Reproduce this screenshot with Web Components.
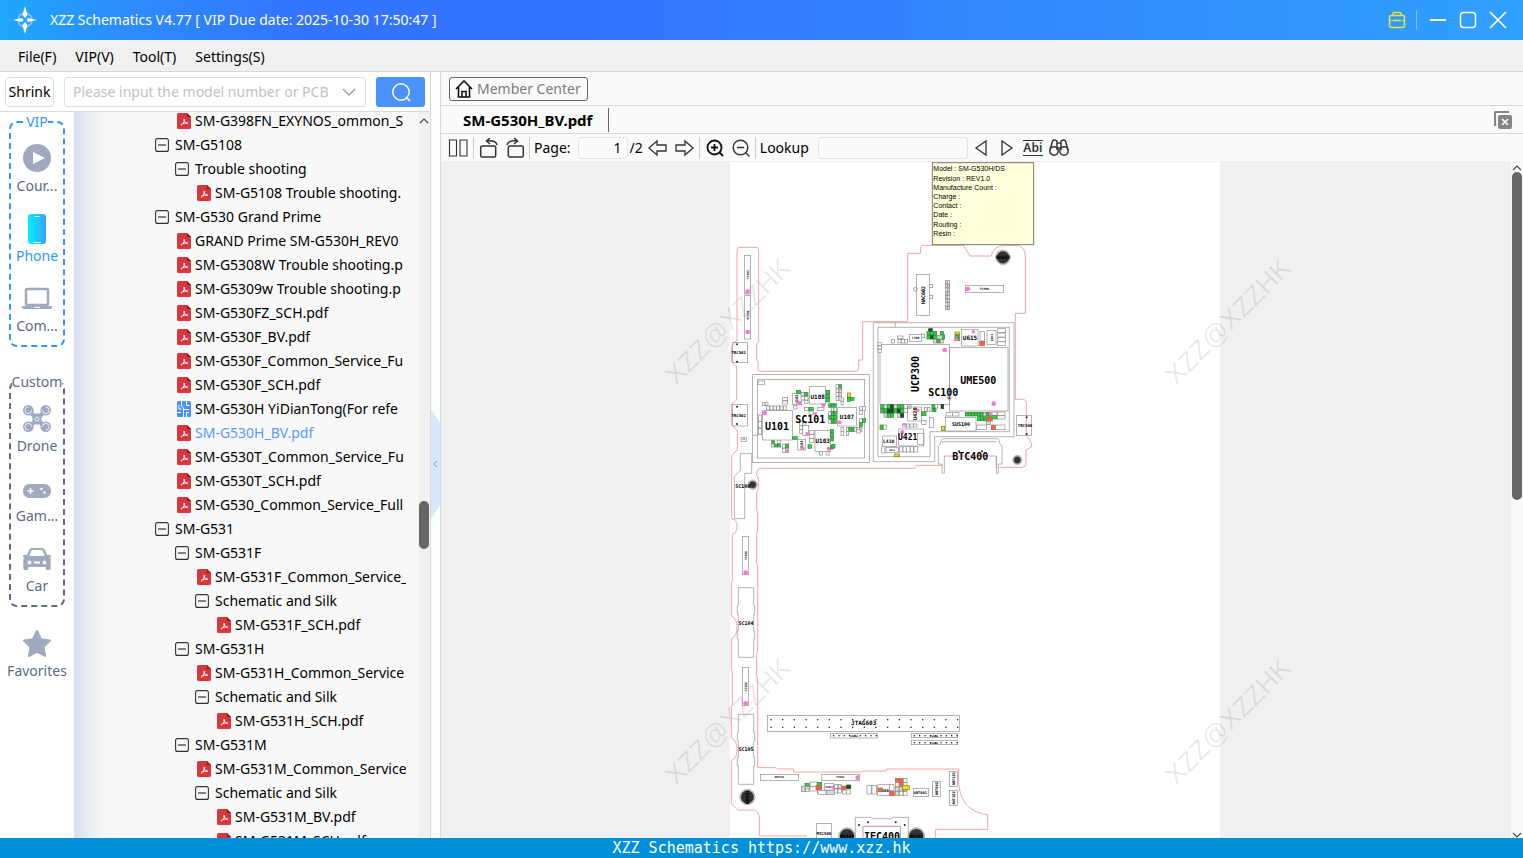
<!DOCTYPE html>
<html lang="en">
<head>
<meta charset="utf-8">
<title>XZZ Schematics</title>
<style>
  html, body {
    margin: 0;
    height: 100%;
    overflow: hidden;
    font-family: "Noto Sans", "Open Sans", sans-serif;
    font-size: 14px;
    line-height: 20px;
    color: #000;
  }
</style>
</head>
<body>
<xzz-app></xzz-app>

<script>
const BASE = `
  * { box-sizing: border-box; }
  button, a, input, fieldset, legend { font: inherit; color: inherit; margin: 0; padding: 0; border: 0; background: none; }
  button { cursor: pointer; }
  a { text-decoration: none; }
  svg { display: block; }
`;

const ICONS = {
  logo: [28, 28, `<circle cx="14" cy="14" r="7" fill="none" stroke="#8fc4ff" stroke-width="1.5"/>
    <path d="M14 0l2.6 9-2.6 3-2.6-3zM14 28l2.6-9-2.6-3-2.6 3zM2 14l9-2 1.500 2-1.500 2zM26 14l-9-2-1.500 2 1.500 2z" fill="#fff"/>`],
  bag: [18, 18, `<g fill="none" stroke="#e6e23c" stroke-width="1.500"><rect x="1.500" y="4.500" width="15" height="12" rx="2"/><path d="M5 4.500v-2q0-1 1-1h6q1 0 1 1v2M1.500 9.500h2M14.500 9.500h2M4.500 9.500h9"/></g>`],
  min: [18, 18, `<path d="M1 9h16" stroke="#fff" stroke-width="2"/>`],
  max: [18, 18, `<rect x="1.500" y="1.500" width="15" height="15" rx="3" fill="none" stroke="#fff" stroke-width="1.500"/>`],
  close: [18, 18, `<path d="M1 1l16 16M17 1L1 17" stroke="#fff" stroke-width="1.700"/>`],
  down: [14, 14, `<path d="M1 4l6 6 6-6" fill="none" stroke="#9a9ea6" stroke-width="1.500"/>`],
  search: [20, 20, `<circle cx="10" cy="10" r="8.200" fill="none" stroke="#fff" stroke-width="1.500"/><path d="M15 15l4 4" stroke="#fff" stroke-width="1.700"/>`],
  course: [28, 28, `<circle cx="14" cy="14" r="14" fill="#a0a9bf"/><path d="M10 8l12 6-12 6z" fill="#fff"/>`],
  phone: [28, 32, `<defs><linearGradient id="g"><stop stop-color="#00f0ff"/><stop offset="1" stop-color="#3aa2ff"/></linearGradient></defs>
    <rect x="5" y="0" width="18" height="30" rx="3" fill="url(#g)"/><path d="M11.500 2.500h5M10 28.500h8" stroke="#d6f6ff" stroke-width="1.200"/>`],
  computer: [30, 28, `<rect x="4" y="5" width="22" height="16" rx="1" fill="none" stroke="#a0a9bf" stroke-width="2.500"/><path d="M0 22h30v2q-1 1-2 1H2q-1 0-2-1z" fill="#a0a9bf"/><path d="M12 23.300h6" stroke="#fff"/>`],
  drone: [28, 28, `<g transform="translate(0 1)"><path d="M6 6l16 16M22 6L6 22" stroke="#a0a9bf" stroke-width="4"/><rect x="9.500" y="8.500" width="9" height="11" rx="3" fill="#a0a9bf"/>
    <g fill="#a0a9bf"><circle cx="5.300" cy="5.300" r="5.300"/><circle cx="22.700" cy="5.300" r="5.300"/><circle cx="5.300" cy="21.700" r="5.300"/><circle cx="22.700" cy="21.700" r="5.300"/></g>
    <g fill="none" stroke="#fff" stroke-width=".8"><path d="M5.300 2a3.300 3.300 0 1 0 3.300 3.300M22.700 2a3.300 3.300 0 1 1-3.300 3.300M5.300 25a3.300 3.300 0 1 1 3.300-3.300M22.700 25a3.300 3.300 0 1 0-3.300-3.300"/><circle cx="14" cy="14" r="2"/></g></g>`],
  game: [28, 28, `<rect y="10" width="28" height="14" rx="6.500" fill="#a0a9bf"/><path d="M4.500 17h6M7.500 14v6" stroke="#fff" stroke-width="1.500"/><circle cx="18.500" cy="15" r="1.200" fill="#fff"/><circle cx="21.500" cy="18.500" r="1.200" fill="#fff"/>`],
  car: [28, 28, `<g transform="translate(0 2)"><path d="M0 10q0-1 1.500-1H4l2-5q1-2 3-2h10q2 0 3 2l2 5h2.500Q28 9 28 10v1h-1.500l1.200 2V22q0 2-1.500 2h-2q-1.500 0-1.500-2v-1H5.300v1q0 2-1.500 2h-2Q.3 24 .3 22V13l1.200-2H0z" fill="#a0a9bf"/>
    <path d="M6.500 9l1.700-4q.3-1 1.300-1h9q1 0 1.300 1l1.700 4q.2 1-.6 1H7.100q-.8 0-.6-1z" fill="#fff"/><circle cx="6.500" cy="16.500" r="1.900" fill="#fff"/><circle cx="21.500" cy="16.500" r="1.900" fill="#fff"/><rect x="11" y="15.500" width="6" height="2" fill="#fff"/></g>`],
  star: [28, 28, `<path d="M14 2l4 8.300 9 1.300-6.500 6.300 1.500 9L14 22.600 6 27l1.500-9L1 11.600l9-1.300z" fill="#a0a9bf" stroke="#a0a9bf" stroke-width="2" stroke-linejoin="round"/>`],
  minus: [14, 14, `<rect x=".6" y=".6" width="12.800" height="12.800" rx="2" fill="none" stroke="#333" stroke-width="1.100"/><path d="M3 7h8" stroke="#333" stroke-width="1.200"/>`],
  pdf: [14, 16, `<path d="M1.500 0H10l4 4v10.500q0 1.500-1.500 1.500h-11Q0 16 0 14.500v-13Q0 0 1.500 0z" fill="#d6383f"/><path d="M10 0l4 4h-4z" fill="#8c1a20"/><path d="M7.300 6c-.8 2.500 2 4.500 3.700 4.300M7.300 6c.6 2.500-1.800 5.500-3.300 6.300M4.500 11.500c1.500-1.500 4-1.800 6.500-1.200" fill="none" stroke="#fff"/>`],
  board: [14, 16, `<rect width="14" height="16" rx="1.500" fill="#4a90f5"/><path d="M4.500 0v5l2 2v9M9.500 0v4.500h3M2 4v4h2.500M0 11.500h4M9.500 16v-4.500H12M7 8.500h5" fill="none" stroke="#fff" stroke-width="1"/>`],
  home: [18, 18, `<path d="M1 9L9 1l8 8M3.500 7v10h11V7M7 17v-5.500h4V17" fill="none" stroke="#111" stroke-width="1.600"/>`],
  closeall: [18, 18, `<path d="M1 15V2q0-1 1-1h13" fill="none" stroke="#858585" stroke-width="2.200"/><rect x="4" y="4" width="14" height="14" rx="2" fill="#858585"/><path d="M8 8l6 6M14 8l-6 6" stroke="#fff" stroke-width="1.600"/>`],
  pages: [20, 20, `<path d="M1.500 2h7v16h-7zM12 2h7v16h-7z" fill="none" stroke="#333" stroke-width="1.100"/>`],
  rotl: [20, 20, `<g fill="none" stroke="#333" stroke-width="1.500"><rect x="1.700" y="8" width="15" height="11" rx="1.500"/><path d="M18 7q-1-5-10-4M11 0L7.500 3 11 6"/></g>`],
  rotr: [20, 20, `<g fill="none" stroke="#333" stroke-width="1.500"><rect x="3.300" y="8" width="15" height="11" rx="1.500"/><path d="M2 7q1-5 10-4M9 0l3.500 3L9 6"/></g>`],
  prev: [20, 20, `<path d="M1 10l8-7v4h9v6H9v4z" fill="none" stroke="#333" stroke-width="1.300"/>`],
  next: [20, 20, `<path d="M19 10l-8-7v4H2v6h9v4z" fill="none" stroke="#333" stroke-width="1.300"/>`],
  zin: [20, 20, `<g fill="none" stroke="#111" stroke-width="1.800"><circle cx="9.500" cy="9.500" r="7"/><path d="M14 14l4 4M6 9.500h7M9.500 6v7"/></g>`],
  zout: [20, 20, `<g fill="none" stroke="#333" stroke-width="1.400"><circle cx="9.500" cy="9.500" r="7.300"/><path d="M14.500 14.500l4 4M6 9.500h7"/></g>`],
  tril: [20, 20, `<path d="M15 3v14L5 10z" fill="none" stroke="#333" stroke-width="1.300"/>`],
  trir: [20, 20, `<path d="M5 3v14l10-7z" fill="none" stroke="#333" stroke-width="1.300"/>`],
  binoc: [20, 20, `<g fill="none" stroke="#333" stroke-width="1.500"><circle cx="5" cy="13" r="4.200"/><circle cx="15" cy="13" r="4.200"/><path d="M1 12L3.500 3Q5 1 8 3v9M19 12l-2.500-9Q15 1 12 3v9M8 5h4M8 10h4"/></g>`],
  up: [10, 6, `<path d="M1 5l4-4 4 4" fill="none" stroke="#444" stroke-width="1.100"/>`],
  dn: [10, 6, `<path d="M1 1l4 4 4-4" fill="none" stroke="#444" stroke-width="1.100"/>`],
  left: [5, 8, `<path d="M4 1L1 4l3 3" fill="none" stroke="#3fa0f0"/>`],
};

class AppIcon extends HTMLElement {
  constructor() {
    super();
    this.attachShadow({ mode: 'open' });
  }

  connectedCallback() {
    const [w, h, body] = ICONS[this.getAttribute('name')];
    this.shadowRoot.innerHTML = `
      <style>:host { display: block; flex: none; } svg { display: block; }</style>
      <svg width="${w}" height="${h}" viewBox="0 0 ${w} ${h}" aria-hidden="true">${body}</svg>`;
  }
}
customElements.define('app-icon', AppIcon);

class TitleBar extends HTMLElement {
  constructor() {
    super();
    this.attachShadow({ mode: 'open' }).innerHTML = `
      <style>${BASE}
        :host {
          display: flex;
          align-items: center;
          height: 40px;
          padding: 0 16px 0 11px;
          color: #fff;
          background: linear-gradient(90deg, #1fa8fc 0, #2c8dfd 120px, #3374ff 300px, #3374ff 600px, #3199ff 90%, #2fa0ff);
        }
        .title { flex: 1; margin-left: 11px; }
        .tools { display: flex; align-items: center; gap: 12px; }
        .tools i { width: 1px; height: 20px; margin-left: -2px; background: #7fc0ff; }
      </style>
      <app-icon name="logo"></app-icon>
      <span class="title"><slot></slot></span>
      <div class="tools">
        <button aria-label="Membership"><app-icon name="bag"></app-icon></button><i></i>
        <button aria-label="Minimize"><app-icon name="min"></app-icon></button>
        <button aria-label="Maximize"><app-icon name="max"></app-icon></button>
        <button aria-label="Close"><app-icon name="close"></app-icon></button>
      </div>`;
  }
}
customElements.define('title-bar', TitleBar);

class MenuBar extends HTMLElement {
  constructor() {
    super();
    this.attachShadow({ mode: 'open' }).innerHTML = `
      <style>${BASE}
        :host {
          display: flex;
          align-items: center;
          gap: 19px;
          height: 32px;
          padding: 2px 18px 0;
          background: #f0f0f0;
          border-bottom: 1px solid #d9d9d9;
          box-sizing: border-box;
        }
      </style>
      <button>File(F)</button><button>VIP(V)</button><button>Tool(T)</button><button>Settings(S)</button>`;
  }
}
customElements.define('menu-bar', MenuBar);

class SearchRow extends HTMLElement {
  constructor() {
    super();
    this.attachShadow({ mode: 'open' }).innerHTML = `
      <style>${BASE}
        :host {
          display: flex;
          gap: 10px;
          height: 40px;
          padding: 5px 5px 4px;
          background: #fff;
          border-bottom: 1px solid #d9d9d9;
          box-sizing: border-box;
        }
        .shrink { width: 49px; border: 1px solid #dcdfe6; border-radius: 4px; }
        .combo {
          flex: 1;
          display: flex;
          align-items: center;
          min-width: 0;
          padding: 0 9px 0 8px;
          border: 1px solid #dcdfe6;
          border-radius: 3px;
        }
        .combo input { flex: 1; min-width: 0; outline: 0; }
        .combo input::placeholder { color: #bfc2c8; opacity: 1; }
        .go { display: grid; place-items: center; width: 49px; background: #4a93ff; border-radius: 3px; }
      </style>
      <button class="shrink">Shrink</button>
      <div class="combo">
        <input aria-label="Model number" placeholder="Please input the model number or PCB">
        <button aria-label="History"><app-icon name="down"></app-icon></button>
      </div>
      <button class="go" aria-label="Search"><app-icon name="search"></app-icon></button>`;
  }
}
customElements.define('search-row', SearchRow);

class RailItem extends HTMLElement {
  constructor() {
    super();
    this.attachShadow({ mode: 'open' });
  }

  connectedCallback() {
    this.shadowRoot.innerHTML = `
      <style>${BASE}
        :host { display: block; color: #606a80; }
        :host([active]) { color: #3296fa; }
        button { display: flex; flex-direction: column; align-items: center; width: 100%; height: 70px; padding-top: 12px; gap: 4px; }
        span { display: grid; place-items: center; height: 28px; }
      </style>
      <button><span><app-icon name="${this.getAttribute('icon')}"></app-icon></span><slot></slot></button>`;
  }
}
customElements.define('rail-item', RailItem);

class CategoryRail extends HTMLElement {
  constructor() {
    super();
    this.attachShadow({ mode: 'open' }).innerHTML = `
      <style>${BASE}
        :host { display: block; width: 74px; background: #fff; flex: none; }
        fieldset {
          margin: 0 9px 25px;
          padding-bottom: 3px;
          min-width: 0;
          border: 2px dashed #3296fa;
          border-radius: 8px;
        }
        fieldset.custom { border-color: #606a80; margin-bottom: 10px; }
        legend { margin: 0 auto; color: #3296fa; }
        .custom legend { color: #606a80; }
      </style>
      <fieldset>
        <legend>VIP</legend>
        <rail-item icon="course">Cour...</rail-item>
        <rail-item icon="phone" active>Phone</rail-item>
        <rail-item icon="computer">Com...</rail-item>
      </fieldset>
      <fieldset class="custom">
        <legend>Custom</legend>
        <rail-item icon="drone">Drone</rail-item>
        <rail-item icon="game">Gam...</rail-item>
        <rail-item icon="car">Car</rail-item>
      </fieldset>
      <rail-item icon="star">Favorites</rail-item>`;
  }
}
customElements.define('category-rail', CategoryRail);

class ScrollTrack extends HTMLElement {
  constructor() {
    super();
    this.attachShadow({ mode: 'open' }).innerHTML = `
      <style>${BASE}
        :host { display: flex; flex-direction: column; align-items: center; flex: none; width: 12px; background: #f0f0f0; }
        app-icon { padding: var(--pad, 6px) 0 0; }
        .end { display: var(--end, block); }
        .before { flex: var(--before) 1 0; }
        .thumb { flex: var(--thumb) 1 0; width: 10px; border-radius: 5px; background: #666; }
        .after { flex: var(--after) 1 0; }
      </style>
      <app-icon name="up"></app-icon><div class="before"></div><div class="thumb"></div><div class="after"></div><app-icon class="end" name="dn"></app-icon>`;
  }
}
customElements.define('scroll-track', ScrollTrack);

// level, kind, label
const FILES = [
  [2, 'pdf', 'SM-G398FN_EXYNOS_ommon_S'],
  [1, 'minus', 'SM-G5108'],
  [2, 'minus', 'Trouble shooting'],
  [3, 'pdf', 'SM-G5108 Trouble shooting.'],
  [1, 'minus', 'SM-G530 Grand Prime'],
  [2, 'pdf', 'GRAND Prime SM-G530H_REV0'],
  [2, 'pdf', 'SM-G5308W Trouble shooting.p'],
  [2, 'pdf', 'SM-G5309w Trouble shooting.p'],
  [2, 'pdf', 'SM-G530FZ_SCH.pdf'],
  [2, 'pdf', 'SM-G530F_BV.pdf'],
  [2, 'pdf', 'SM-G530F_Common_Service_Fu'],
  [2, 'pdf', 'SM-G530F_SCH.pdf'],
  [2, 'board', 'SM-G530H YiDianTong(For refe'],
  [2, 'pdf', 'SM-G530H_BV.pdf', true],
  [2, 'pdf', 'SM-G530T_Common_Service_Fu'],
  [2, 'pdf', 'SM-G530T_SCH.pdf'],
  [2, 'pdf', 'SM-G530_Common_Service_Full'],
  [1, 'minus', 'SM-G531'],
  [2, 'minus', 'SM-G531F'],
  [3, 'pdf', 'SM-G531F_Common_Service_'],
  [3, 'minus', 'Schematic and Silk'],
  [4, 'pdf', 'SM-G531F_SCH.pdf'],
  [2, 'minus', 'SM-G531H'],
  [3, 'pdf', 'SM-G531H_Common_Service'],
  [3, 'minus', 'Schematic and Silk'],
  [4, 'pdf', 'SM-G531H_SCH.pdf'],
  [2, 'minus', 'SM-G531M'],
  [3, 'pdf', 'SM-G531M_Common_Service'],
  [3, 'minus', 'Schematic and Silk'],
  [4, 'pdf', 'SM-G531M_BV.pdf'],
  [4, 'pdf', 'SM-G531M_SCH.pdf'],
];

class FileTree extends HTMLElement {
  constructor() {
    super();
    this.attachShadow({ mode: 'open' }).innerHTML = `
      <style>${BASE}
        :host {
          display: flex;
          flex: 1;
          min-width: 0;
          background: linear-gradient(90deg, #d5e0f2 0, #e6eaf2 12px, #f8f8f8 32px);
        }
        .list { flex: 1; min-width: 0; overflow: hidden; margin-right: 12px; }
        ul { list-style: none; margin: -3px 0 0; padding: 0; }
        li {
          display: flex;
          align-items: center;
          height: 24px;
          padding-left: calc(61px + 20px * var(--level));
          white-space: nowrap;
        }
        li app-icon { margin-right: 6px; }
        li app-icon:not([name="minus"]) { margin: 0 4px 0 2px; }
        .on { color: #5a9bff; }
        scroll-track { --before: 377; --thumb: 48; --after: 289; --end: none; }
      </style>
      <div class="list"><ul>${FILES.map(([level, kind, label, on]) => `
        <li style="--level:${level}"><app-icon name="${kind}"></app-icon><span class="${on ? 'on' : ''}">${label}</span></li>`).join('')}
      </ul></div>
      <scroll-track></scroll-track>`;
  }
}
customElements.define('file-tree', FileTree);

class PanelHandle extends HTMLElement {
  constructor() {
    super();
    this.attachShadow({ mode: 'open' }).innerHTML = `
      <style>${BASE}
        :host {
          display: flex;
          align-items: center;
          width: 11px;
          flex: none;
          padding-top: 18px;
          background: #fafffa;
          border: 1px solid #d9d9d9;
          border-width: 0 1px;
          box-sizing: border-box;
        }
        button {
          display: grid;
          place-items: center;
          width: 9px;
          height: 110px;
          background: #d3e8ff;
          clip-path: polygon(0 0, 100% 14px, 100% 96px, 0 100%);
        }
      </style>
      <button aria-label="Collapse panel"><app-icon name="left"></app-icon></button>`;
  }
}
customElements.define('panel-handle', PanelHandle);

class DocTabs extends HTMLElement {
  constructor() {
    super();
    this.attachShadow({ mode: 'open' }).innerHTML = `
      <style>${BASE}
        :host { display: block; background: #fafafa; }
        .row { display: flex; align-items: center; border-bottom: 1px solid #d9d9d9; }
        .top { height: 34px; padding-left: 8px; }
        .tabs { height: 28px; padding: 0 11px 0 8px; justify-content: space-between; }
        .home {
          display: flex;
          align-items: center;
          gap: 4px;
          height: 24px;
          padding: 0 6px 0 5px;
          border: 1px solid #666;
          border-radius: 3px;
          color: #7c7c7c;
        }
        .tab { height: 24px; padding: 0 16px 0 14px; border-right: 1px solid #666; font-size: 15px; font-weight: 700; }
      </style>
      <div class="row top"><button class="home"><app-icon name="home"></app-icon>Member Center</button></div>
      <div class="row tabs">
        <button class="tab">SM-G530H_BV.pdf</button>
        <button aria-label="Close all"><app-icon name="closeall"></app-icon></button>
      </div>`;
  }
}
customElements.define('doc-tabs', DocTabs);

class DocToolbar extends HTMLElement {
  constructor() {
    super();
    this.attachShadow({ mode: 'open' }).innerHTML = `
      <style>${BASE}
        :host { display: flex; align-items: center; height: 27px; padding-left: 7px; background: #fafafa; box-sizing: border-box; }
        button { flex: none; }
        button + button { margin-left: 6px; }
        span + button { margin-left: 5px; }
        i { width: 1px; height: 22px; margin: 0 4px; background: #ccc; }
        i.wide { margin: 0 5px; }
        input { height: 22px; border: 1px solid #e2e2e2; border-radius: 3px; background: #fafafa; }
        .num { width: 50px; margin: 0 2px 0 7px; padding-right: 5px; text-align: right; }
        .find { width: 150px; margin: 0 3px 0 9px; }
        .abi { width: 20px; font-size: 12px; line-height: 14px; font-weight: 600; color: #333; text-align: center; }
        .abi span { display: block; border: 1px solid #333; border-width: 1px 0; }
      </style>
      <button aria-label="Two pages"><app-icon name="pages"></app-icon></button><i class="wide"></i>
      <button aria-label="Rotate left"><app-icon name="rotl"></app-icon></button>
      <button aria-label="Rotate right"><app-icon name="rotr"></app-icon></button><i></i>
      <label for="page">Page:</label><input class="num" id="page" value="1"><span>/2</span>
      <button aria-label="Previous page"><app-icon name="prev"></app-icon></button>
      <button aria-label="Next page"><app-icon name="next"></app-icon></button><i class="wide"></i>
      <button aria-label="Zoom in"><app-icon name="zin"></app-icon></button>
      <button aria-label="Zoom out"><app-icon name="zout"></app-icon></button><i></i>
      <label for="find">Lookup</label><input class="find" id="find">
      <button aria-label="Find previous"><app-icon name="tril"></app-icon></button>
      <button aria-label="Find next"><app-icon name="trir"></app-icon></button>
      <button class="abi"><span>Abi</span></button>
      <button aria-label="Find"><app-icon name="binoc"></app-icon></button>`;
  }
}
customElements.define('doc-toolbar', DocToolbar);

// Board drawing. Three units are one pixel at 100%.
const FILL = { w: '#fff', g: '#22d832', d: '#0b5a14', r: '#ff5f3c', y: '#f0dc1e', x: '#dcdcdc' };
const EDGE = { w: '#888', g: '#3a7a40', d: '#243', r: '#b65', y: '#872', x: '#888' };

// grid of small parts; a space in a row leaves the place empty
function cells(x, y, w, h, ...rows) {
  return rows.map((row, r) => [...row].map((c, i) => c === ' ' ? '' :
    `<rect x="${x + i * w}" y="${y + r * h}" width="${w - 1}" height="${h - 1}" fill="${FILL[c]}" stroke="${EDGE[c]}"/>`).join('')).join('');
}

const box = (x, y, w, h) => `<rect x="${x}" y="${y}" width="${w}" height="${h}"/>`;
const pin = (x, y, r = 7) => `<circle cx="${x}" cy="${y}" r="${r}" fill="#ff73c8" stroke="none"/>`;
const dot = (x, y) => `<circle cx="${x}" cy="${y}" r="3" fill="#222" stroke="none"/>`;
const dots = (x, y, n, step) => Array.from({ length: n }, (_, i) => `<rect x="${x + i * step}" y="${y}" width="4" height="4" fill="#333" stroke="none"/>`).join('');
const hole = (x, y, r, name = '') => `<circle cx="${x}" cy="${y}" r="${r + 3}"/><circle cx="${x}" cy="${y}" r="${r}" fill="#333"/>${name && label(name, x, y, 14)}`;

function label(text, x, y, size, turn) {
  return `<text x="${x}" y="${y + Math.round(size * 0.36)}" font-size="${size}"${turn ? ` transform="rotate(-90 ${x} ${y})"` : ''}>${text}</text>`;
}

const NOTE = ['Model : SM-G530H/DS', 'Revision : REV1.0', 'Manufacture Count :', 'Charge :', 'Contact :', 'Date :', 'Routing :', 'Resin :'];

const OUTLINE = `
  M33 540 V270 q0 -8 9 -8 H90 q8 0 8 8 V545 l-6 6 V600 l4 6 v22 q0 6 8 6 H390 q8 0 8 -10 V600 h12 V485 H545 V280 H584 V262 q0 -6 8 -6 H712 L732 288 H795 Q802 256 840 256 H866 Q898 256 898 288 V460 H868 V718 H893 q8 2 8 12 V830 q16 10 16 30 l-17 10 V910 q0 12 -12 12 H820
  M650 916 H572 L565 925 H104 Q92 926 92 945 L98 960 V985 L92 995 V1050 L95 1055 V1115 L92 1120 V1210 L95 1215 V1475 L92 1480 V1550 L95 1560 V1823 H150 L155 1827 H203 V1836 H410 L415 1833 H482 V1827 H698 V1870 Q705 1955 785 1964 V2008 H628 V2040
  M33 540 L16 560 V605 l16 15 V720 l-16 14 V795 l18 15 V870 L17 885 V1072 L18 1077 Q33 1080 33 1098 Q33 1120 19 1122 V1265 L16 1270 V1367 Q33 1375 33 1402 Q33 1430 16 1436 V1530 L19 1535 V1635 L16 1640 V1735 Q33 1740 33 1770 Q33 1795 16 1802 V1930 L35 1950 H85 Q100 1955 100 1975 V2028 H243`;

const HEADER = `
  ${box(55, 286, 19, 116)}${box(55, 407, 19, 130)}${pin(65, 395)}${pin(65, 516)}
  ${label('TC501', 65, 344, 9, true)}${label('FC501', 65, 465, 9, true)}
  ${box(571, 343, 40, 123)}${label('HAC602', 592, 405, 15, true)}
  <circle cx="568" cy="388" r="6"/>${cells(610, 373, 11, 10, 'w')}${cells(610, 406, 11, 10, 'w')}
  ${cells(658, 362, 7, 11, 'xw', 'xx', 'wx', 'xx', 'xw', 'xx', 'wx', 'xx')}${pin(668, 381, 4)}
  ${box(718, 376, 115, 21)}${pin(725, 387)}${label('TC500', 775, 387, 9)}
  ${hole(831, 292, 19, 'BH602')}`;

const MIDDLE = `
  ${box(20, 97, 44, 61)}${box(20, 283, 44, 65)}${label('TRC501', 38, 129, 12)}${label('TRC502', 38, 316, 12)}
  ${dot(33, 103)}${dot(33, 155)}${dot(33, 290)}${dot(33, 342)}
  ${box(45, 382, 16, 12)}${label('C1', 53, 388, 7)}
  <path d="M43 430 h34 v60 h-21 v136 H25 V500 l18 -20z"/>${box(80, 194, 350, 264)}${box(94, 208, 322, 236)}${box(96, 213, 20, 10)}
  <path d="M80 376 h14"/>
  ${cells(109, 278, 9, 10, 'ww')}${cells(122, 288, 10, 13, 'wwwwww')}${cells(170, 263, 16, 10, 'w', 'w')}
  ${box(110, 302, 90, 88)}${pin(116, 309)}${label('U101', 153, 348, 30)}
  ${cells(97, 315, 11, 20, 'w', 'w', 'w')}${box(200, 250, 26, 34)}${label('U102', 213, 267, 11, true)}${pin(220, 278, 6)}
  ${cells(211, 241, 14, 10, 'g', ' ')}${cells(225, 247, 11, 12, 'xg', 'ww')}${cells(236, 260, 11, 11, 'w', 'w')}${cells(203, 286, 11, 12, 'w')}
  ${box(250, 229, 49, 53)}${label('U108', 275, 261, 18)}${pin(292, 285, 6)}${cells(300, 241, 12, 12, 'g', 'g', 'g')}
  ${cells(235, 292, 14, 11, 'wg', ' w')}${cells(275, 292, 20, 11, 'w')}${pin(268, 312, 5)}
  ${cells(308, 281, 8, 12, 'ggg', ' ww', 'wgg', 'ggg', 'wgg')}${box(335, 292, 56, 56)}${label('U107', 363, 321, 18)}${pin(341, 337, 6)}
  ${cells(330, 224, 9, 12, 'wg', 'wx', 'wx', 'ww')}${pin(339, 238, 4)}${cells(345, 264, 8, 11, 'w', 'w')}
  ${cells(364, 249, 10, 13, 'y', 'g')}${cells(373, 262, 12, 10, 'g')}
  ${cells(345, 352, 8, 13, 'w wggwwx', 'w w')}${cells(400, 290, 10, 12, 'ww', 'w', ' ', 'wg', 'g')}${cells(392, 360, 12, 10, 'w')}
  ${box(267, 362, 47, 62)}${label('U103', 290, 393, 18)}${pin(308, 416, 6)}${cells(314, 358, 9, 12, 'g', 'g', 'g', ' ', 'g')}
  ${cells(221, 335, 10, 12, 'ww', 'w ', 'w ')}${box(230, 346, 18, 30)}${pin(243, 371, 5)}${cells(250, 362, 15, 12, 'w', 'w', 'w')}
  ${cells(200, 380, 15, 9, 'g')}${box(215, 388, 24, 32)}${label('U104', 227, 405, 11, true)}${pin(231, 415, 5)}${cells(246, 404, 11, 12, 'g')}
  ${cells(137, 392, 9, 10, 'g w', 'xgg')}${cells(169, 402, 10, 13, 'wg', 'ww')}${pin(184, 423, 5)}
  ${cells(280, 424, 10, 12, 'w w')}${cells(318, 403, 10, 12, 'g')}
  ${label('SC101', 253, 327, 30)}

  <path d="M442 38 H864 V380 H626 V455 H442z M456 52 H850 V365 H612 V440 H456z M508 38 V52"/>
  ${box(462, 103, 208, 180)}${box(670, 113, 176, 190)}${pin(656, 120)}${pin(803, 281)}
  ${label('UCP300', 567, 192, 30, true)}${label('UME500', 757, 210, 30)}${label('SC100', 652, 247, 30)}
  ${cells(456, 98, 11, 10, 'w', 'w', 'w')}${cells(496, 88, 10, 12, 'w www')}${cells(514, 78, 18, 9, 'w')}
  ${box(550, 73, 36, 22)}${label('L300', 569, 84, 9)}${cells(587, 72, 10, 12, 'w')}
  ${cells(603, 64, 10, 12, 'ggg g', 'gdgx ', '  xgx')}${cells(648, 74, 9, 14, 'g')}${cells(608, 56, 12, 8, 'd')}
  ${cells(687, 66, 14, 9, 'y', 'g', 'g')}${pin(690, 88, 6)}${box(707, 58, 49, 50)}${label('U615', 732, 85, 18)}${pin(742, 65, 5)}
  ${cells(762, 64, 14, 30, 'w')}${cells(761, 94, 16, 14, 'r')}${box(783, 62, 27, 41)}${label('L601', 797, 83, 9, true)}
  ${cells(815, 56, 24, 13, 'w', 'w', 'w', 'w')}
  ${cells(464, 284, 10, 13, 'gxgdxgg', 'ggddgdg', ' xgg xd')}${cells(534, 284, 11, 12, 'wx', 'w')}
  ${cells(595, 293, 9, 13, 'ww g')}${cells(618, 284, 9, 11, 'gw', 'g')}${cells(645, 283, 9, 14, 'd')}
  <circle cx="670" cy="264" r="6"/>${dot(670, 264)}
  ${box(545, 291, 42, 42)}${label('U420', 567, 311, 16, true)}${pin(576, 301, 5)}${cells(587, 305, 14, 13, 'g', ' ', 'w')}${box(610, 322, 12, 30)}
  ${cells(462, 345, 10, 14, 'gw')}${cells(530, 342, 11, 10, 'wwww')}${pin(535, 343, 4)}${pin(529, 366, 6)}
  ${box(518, 357, 75, 51)}${label('U421', 545, 382, 24)}${box(574, 370, 20, 33)}${box(470, 378, 42, 31)}${label('L410', 488, 394, 14)}
  ${cells(480, 412, 38, 17, 'w')}${label('R412', 498, 420, 7)}${cells(520, 410, 11, 17, 'wwwww')}${cells(467, 410, 11, 20, 'w')}${cells(505, 432, 17, 9, 'y')}
  ${box(658, 322, 92, 41)}${label('SUS100', 705, 343, 15)}${cells(646, 349, 11, 14, 'y')}
  ${cells(660, 308, 20, 11, 'ww')}${cells(718, 307, 9, 12, 'ggggggxg')}${cells(790, 306, 24, 11, 'ww', 'gw')}${cells(754, 320, 10, 13, 'gggr')}
  ${cells(784, 322, 16, 12, 'r')}${cells(752, 345, 30, 14, 'w')}${cells(796, 345, 42, 15, 'w')}${cells(796, 346, 14, 13, 'r')}${cells(781, 335, 13, 10, 'x')}${pin(795, 312, 5)}
  <path d="M653 490 h-5 v-28 h-11 V408 q8 -4 8 -14 q0 -8 8 -8 H812 q8 0 8 8 q0 10 8 14 V462 h-11 v28 h-6 V438 M655 490 V438 M648 395 h164"/>
  <path d="M655 438 H811 V474" stroke="#c77"/>${dot(699, 424)}${dot(768, 424)}${label('BTC400', 733, 439, 30)}
  ${hole(874, 450, 11)}${box(871, 316, 45, 61)}${dot(902, 322)}${dot(902, 372)}${label('TRC500', 897, 348, 12)}`;

const LOWER = `
  ${hole(80, 44, 11)}${label('SC108', 50, 48, 15)}
  ${box(49, 199, 19, 115)}${pin(59, 308)}${label('TC506', 59, 257, 9, true)}
  <path d="M37 353 h46 v55 h3 v25 h-3 v50 h3 v24 h-3 v55 H37 v-55 h-3 v-24 h3 v-50 h-3 v-25 h3z"/>${label('SC104', 60, 459, 15)}
  ${box(49, 592, 19, 115)}${pin(59, 700)}${label('TC508', 59, 650, 9, true)}`;

const BOTTOM = `
  <path d="M37 73 h46 v55 h3 v25 h-3 v50 h3 v24 h-3 v56 H37 v-56 h-3 v-24 h3 v-50 h-3 v-25 h3z"/>${label('SC105', 60, 178, 15)}
  ${hole(64, 321, 20)}${label('BH401', 64, 321, 14, true)}
  ${box(124, 76, 576, 48)}${dots(133, 87, 17, 35)}${dots(133, 110, 17, 35)}${label('JTAG603', 413, 100, 18)}
  ${box(314, 130, 140, 14)}${dots(321, 135, 9, 16)}${box(556, 130, 139, 13)}${dots(563, 135, 9, 16)}${box(556, 151, 139, 13)}${dots(563, 156, 9, 16)}
  ${label('CON601', 384, 137, 7)}${label('CON602', 625, 137, 7)}${label('CON603', 625, 158, 7)}
  ${box(103, 253, 115, 18)}${label('ANT103', 160, 262, 8)}${box(286, 253, 115, 18)}${label('TC502', 343, 262, 8)}${pin(395, 263)}
  ${cells(226, 290, 12, 16, 'xw')}${cells(237, 280, 14, 9, 'g', 'x')}${cells(252, 276, 22, 14, 'w', 'w')}${cells(274, 277, 14, 11, 'g', 'r', 'w')}
  ${cells(270, 286, 16, 14, 'r')}${box(295, 280, 28, 20)}${label('U401', 308, 290, 8)}${pin(321, 292, 5)}${cells(276, 302, 25, 12, 'wx')}
  ${cells(325, 284, 11, 13, 'wx', 'ww')}${cells(347, 288, 14, 13, 'r')}${cells(362, 285, 13, 12, 'd')}${cells(350, 300, 12, 13, 'ww')}
  ${cells(423, 286, 15, 27, 'ww')}${box(455, 284, 38, 33)}${label('U400', 474, 301, 12)}${cells(456, 294, 14, 12, 'r')}${cells(490, 284, 15, 18, 'w')}${cells(490, 304, 16, 14, 'r')}
  ${cells(508, 265, 12, 13, 'rrw', 'wrw', 'xxy', 'xww')}${cells(529, 287, 22, 12, 'y')}
  ${box(563, 295, 44, 25)}${label('ANT001', 583, 308, 11)}${box(620, 274, 23, 46)}${label('ANT002', 632, 296, 11, true)}
  ${box(670, 244, 24, 45)}${label('ANT101', 683, 266, 11, true)}${box(670, 301, 24, 46)}${label('ANT102', 683, 324, 11, true)}
  ${box(271, 401, 46, 60)}${label('MIC500', 294, 430, 12)}
  ${hole(363, 438, 22, 'BH400')}${hole(571, 438, 22, 'BH402')}
  <path d="M388 480 V382 H436 l4 4 H496 l4 -4 H547 V480"/><path d="M411 480 V409 H523 V480" stroke="#c55"/>
  ${dot(399, 405)}${dot(536, 405)}${dot(426, 397)}${dot(509, 397)}${label('IEC400', 468, 438, 30)}`;

class BoardView extends HTMLElement {
  constructor() {
    super();
    this.attachShadow({ mode: 'open' }).innerHTML = `
      <style>${BASE}
        :host { display: flex; flex: 1; min-height: 0; background: #f0f0f0; }
        .stage { flex: 1; display: flex; justify-content: center; overflow: hidden; padding: 1px 2px 0 0; }
        .page { width: 490px; background: #fff; }
        svg { overflow: visible; }
        svg text { font-family: "DejaVu Sans Mono", monospace; font-weight: 700; text-anchor: middle; fill: #000; stroke: none; }
        svg .note text { font-family: "Liberation Sans", sans-serif; font-weight: 400; text-anchor: start; }
        svg .mark text { font-family: "Liberation Sans", sans-serif; font-weight: 400; fill: #000; fill-opacity: .09; }
        scroll-track { --pad: 4px; --before: 1; --thumb: 328; --after: 328; background: #fafafa; }
      </style>
      <div class="stage"><div class="page">
        <svg width="490" height="690" viewBox="12 6 1470 2070" fill="none" stroke="#8f8f8f" stroke-width="2">
          <g class="mark">${[[6, 484], [1506, 484], [6, 1684], [1506, 1684]].map(([x, y]) =>
            `<text x="${x}" y="${y + 27}" font-size="80" transform="rotate(-45 ${x} ${y})">XZZ@XZZHK</text>`).join('')}</g>
          <path d="${OUTLINE}" stroke="#f7a3a3" stroke-width="3"/>
          <g class="note"><rect x="619" y="8" width="304" height="246" fill="#ffffdc" stroke="#777" stroke-width="3"/>
            ${NOTE.map((t, i) => `<text x="622" y="${34 + Math.round(i * 27.6)}" font-size="21">${t}</text>`).join('')}</g>
          ${HEADER}
          <g transform="translate(0 450)">${MIDDLE}</g>
          <g transform="translate(0 930)">${LOWER}</g>
          <g transform="translate(0 1590)">${BOTTOM}</g>
        </svg>
      </div></div>
      <scroll-track></scroll-track>`;
  }
}
customElements.define('board-view', BoardView);

class StatusBar extends HTMLElement {
  constructor() {
    super();
    this.attachShadow({ mode: 'open' }).innerHTML = `
      <style>
        :host {
          display: block;
          height: 20px;
          text-align: center;
          font: 15px/20px "DejaVu Sans Mono", monospace;
          color: #fff;
          background: #0090da;
        }
      </style><slot></slot>`;
  }
}
customElements.define('status-bar', StatusBar);

class XzzApp extends HTMLElement {
  constructor() {
    super();
    this.attachShadow({ mode: 'open' }).innerHTML = `
      <style>${BASE}
        :host { display: flex; flex-direction: column; height: 100vh; }
        title-bar, menu-bar, status-bar, search-row, doc-tabs, doc-toolbar { flex: none; }
        main { flex: 1; display: flex; min-height: 0; }
        .side { display: flex; flex-direction: column; width: 430px; flex: none; min-height: 0; }
        .lists { flex: 1; display: flex; min-height: 0; overflow: hidden; }
        .doc { flex: 1; display: flex; flex-direction: column; min-width: 0; }
      </style>
      <title-bar>XZZ Schematics V4.77 [ VIP Due date: 2025-10-30 17:50:47 ]</title-bar>
      <menu-bar></menu-bar>
      <main>
        <div class="side">
          <search-row></search-row>
          <div class="lists"><category-rail></category-rail><file-tree></file-tree></div>
        </div>
        <panel-handle></panel-handle>
        <div class="doc">
          <doc-tabs></doc-tabs>
          <doc-toolbar></doc-toolbar>
          <board-view></board-view>
        </div>
      </main>
      <status-bar>XZZ Schematics https://www.xzz.hk</status-bar>`;
  }
}
customElements.define('xzz-app', XzzApp);
</script>
</body>
</html>
